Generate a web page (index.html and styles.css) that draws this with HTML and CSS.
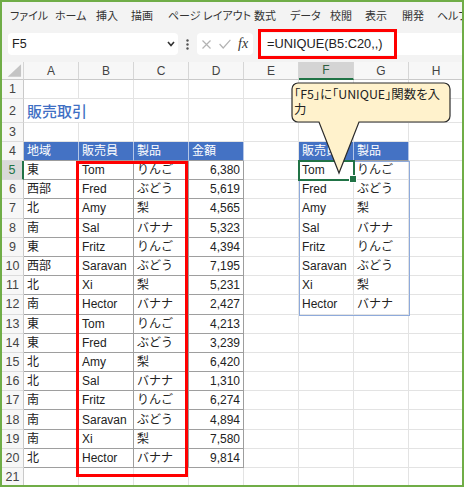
FILE: index.html
```html
<!DOCTYPE html>
<html lang="ja">
<head>
<meta charset="utf-8">
<title>販売取引</title>
<link rel="stylesheet" href="styles.css">
</head>
<body>
<div class="frame">
  <div class="chrome">
    <nav class="menu">
      <span>ファイル</span><span>ホーム</span><span>挿入</span><span>描画</span><span>ページ レイアウト</span><span>数式</span><span>データ</span><span>校閲</span><span>表示</span><span>開発</span><span>ヘルプ</span>
    </nav>
    <div class="fbar">
      <div class="namebox"><span>F5</span><svg width="8" height="6" viewBox="0 0 8 6"><polyline points="1,1 4,4.5 7,1" fill="none" stroke="#333" stroke-width="1.6"/></svg></div>
      <div class="sep"><svg width="3" height="11" viewBox="0 0 3 11"><circle cx="1.5" cy="1.5" r="1.2" fill="#555"/><circle cx="1.5" cy="5.5" r="1.2" fill="#555"/><circle cx="1.5" cy="9.5" r="1.2" fill="#555"/></svg></div>
      <div class="fxbox">
        <svg width="9" height="9" viewBox="0 0 9 9"><path d="M0.5 0.5 L8.5 8.5 M8.5 0.5 L0.5 8.5" stroke="#b3b3b3" stroke-width="1.2"/></svg>
        <svg width="12" height="10" viewBox="0 0 12 10"><polyline points="0.6,5 4.2,9 11.4,0.8" fill="none" stroke="#b3b3b3" stroke-width="1.2"/></svg>
        <span class="fx">fx</span>
      </div>
      <div class="formula"><span>=UNIQUE(B5:C20,,)</span><div class="hl"></div></div>
    </div>
  </div>
  <div class="sheet">
    <div class="c ch corner"><svg width="22" height="18" viewBox="0 0 22 18"><polygon points="20,2 20,15 6,15" fill="#c4c4c4"/></svg></div>
    <div class="c ch">A</div><div class="c ch">B</div><div class="c ch">C</div><div class="c ch">D</div><div class="c ch">E</div><div class="c ch selc">F</div><div class="c ch">G</div><div class="c ch">H</div>

    <div class="c rh">1</div><div class="c"></div><div class="c"></div><div class="c"></div><div class="c"></div><div class="c"></div><div class="c"></div><div class="c"></div><div class="c"></div>
    <div class="c rh">2</div><div class="c title">販売取引</div><div class="c"></div><div class="c"></div><div class="c"></div><div class="c"></div><div class="c"></div><div class="c"></div>
    <div class="c rh">3</div><div class="c"></div><div class="c"></div><div class="c"></div><div class="c"></div><div class="c"></div><div class="c"></div><div class="c"></div><div class="c"></div>
    <div class="c rh">4</div><div class="c th">地域</div><div class="c th">販売員</div><div class="c th">製品</div><div class="c th">金額</div><div class="c"></div><div class="c th">販売員</div><div class="c th">製品</div><div class="c"></div>

    <div class="c rh selr">5</div><div class="c t">東</div><div class="c t">Tom</div><div class="c t">りんご</div><div class="c t n">6,380</div><div class="c"></div><div class="c">Tom</div><div class="c">りんご</div><div class="c"></div>
    <div class="c rh">6</div><div class="c t">西部</div><div class="c t">Fred</div><div class="c t">ぶどう</div><div class="c t n">5,619</div><div class="c"></div><div class="c">Fred</div><div class="c">ぶどう</div><div class="c"></div>
    <div class="c rh">7</div><div class="c t">北</div><div class="c t">Amy</div><div class="c t">梨</div><div class="c t n">4,565</div><div class="c"></div><div class="c">Amy</div><div class="c">梨</div><div class="c"></div>
    <div class="c rh">8</div><div class="c t">南</div><div class="c t">Sal</div><div class="c t">バナナ</div><div class="c t n">5,323</div><div class="c"></div><div class="c">Sal</div><div class="c">バナナ</div><div class="c"></div>
    <div class="c rh">9</div><div class="c t">東</div><div class="c t">Fritz</div><div class="c t">りんご</div><div class="c t n">4,394</div><div class="c"></div><div class="c">Fritz</div><div class="c">りんご</div><div class="c"></div>
    <div class="c rh">10</div><div class="c t">西部</div><div class="c t">Saravan</div><div class="c t">ぶどう</div><div class="c t n">7,195</div><div class="c"></div><div class="c">Saravan</div><div class="c">ぶどう</div><div class="c"></div>
    <div class="c rh">11</div><div class="c t">北</div><div class="c t">Xi</div><div class="c t">梨</div><div class="c t n">5,231</div><div class="c"></div><div class="c">Xi</div><div class="c">梨</div><div class="c"></div>
    <div class="c rh">12</div><div class="c t">南</div><div class="c t">Hector</div><div class="c t">バナナ</div><div class="c t n">2,427</div><div class="c"></div><div class="c">Hector</div><div class="c">バナナ</div><div class="c"></div>
    <div class="c rh">13</div><div class="c t">東</div><div class="c t">Tom</div><div class="c t">りんご</div><div class="c t n">4,213</div><div class="c"></div><div class="c"></div><div class="c"></div><div class="c"></div>
    <div class="c rh">14</div><div class="c t">東</div><div class="c t">Fred</div><div class="c t">ぶどう</div><div class="c t n">3,239</div><div class="c"></div><div class="c"></div><div class="c"></div><div class="c"></div>
    <div class="c rh">15</div><div class="c t">北</div><div class="c t">Amy</div><div class="c t">梨</div><div class="c t n">6,420</div><div class="c"></div><div class="c"></div><div class="c"></div><div class="c"></div>
    <div class="c rh">16</div><div class="c t">北</div><div class="c t">Sal</div><div class="c t">バナナ</div><div class="c t n">1,310</div><div class="c"></div><div class="c"></div><div class="c"></div><div class="c"></div>
    <div class="c rh">17</div><div class="c t">南</div><div class="c t">Fritz</div><div class="c t">りんご</div><div class="c t n">6,274</div><div class="c"></div><div class="c"></div><div class="c"></div><div class="c"></div>
    <div class="c rh">18</div><div class="c t">南</div><div class="c t">Saravan</div><div class="c t">ぶどう</div><div class="c t n">4,894</div><div class="c"></div><div class="c"></div><div class="c"></div><div class="c"></div>
    <div class="c rh">19</div><div class="c t">南</div><div class="c t">Xi</div><div class="c t">梨</div><div class="c t n">7,580</div><div class="c"></div><div class="c"></div><div class="c"></div><div class="c"></div>
    <div class="c rh">20</div><div class="c t">北</div><div class="c t">Hector</div><div class="c t">バナナ</div><div class="c t n">9,814</div><div class="c"></div><div class="c"></div><div class="c"></div><div class="c"></div>
    <div class="c rh">21</div><div class="c"></div><div class="c"></div><div class="c"></div><div class="c"></div><div class="c"></div><div class="c"></div><div class="c"></div><div class="c"></div>

    <div class="spill"></div>
    <div class="active"></div>
    <div class="redbox"></div>
    <div class="callout">
      <svg class="bubble" width="161" height="93" viewBox="0 0 161 93"><path d="M7,1 H153 A6,6 0 0 1 159,7 V34 A6,6 0 0 1 153,40 H68 L48,91 L28,40 H7 A6,6 0 0 1 1,34 V7 A6,6 0 0 1 7,1 Z" fill="#fff2cc" stroke="#2b2b2b" stroke-width="1.2"/></svg>
      <div class="ctext">「F5」に「UNIQUE」関数を入<br>力</div>
    </div>
  </div>
</div>
</body>
</html>
```
FILE: styles.css
```css
* { box-sizing: border-box; }
html, body { margin: 0; padding: 0; background: #fff; }
body { font-family: "Liberation Sans", "Noto Sans CJK JP", sans-serif; color: #222; }

.frame {
  width: 464px;
  height: 487px;
  border: 2px solid #70ad47;
  overflow: hidden;
  background: #fff;
}

.chrome { background: #f3f3f3; height: 60px; }

.menu {
  display: grid;
  grid-template-columns: 45px 41px 35px 37px 86px 36px 40px 35px 37px 35px 40px;
  height: 26px;
  align-items: center;
  padding-left: 8px;
  font-family: "Noto Sans CJK JP", sans-serif;
  font-size: 11px;
  line-height: 14px;
  color: #333;
  font-feature-settings: "palt";
  white-space: nowrap;
  overflow: hidden;
}

.fbar {
  display: flex;
  align-items: flex-start;
  height: 34px;
  padding-top: 5px;
}
.namebox {
  margin-left: 6px;
  width: 170px;
  height: 22px;
  background: #fff;
  border-radius: 4px;
  display: flex;
  align-items: center;
  justify-content: space-between;
  padding: 0 3px 0 4px;
  font-size: 12.5px;
  color: #222;
}
.sep {
  width: 19px;
  height: 22px;
  display: flex;
  align-items: center;
  justify-content: center;
}
.fxbox {
  width: 56px;
  height: 22px;
  background: #fff;
  border-radius: 4px;
  display: flex;
  align-items: center;
  gap: 8px;
  padding-left: 5px;
}
.fx {
  font-family: "Liberation Serif", serif;
  font-style: italic;
  font-size: 14px;
  color: #333;
  margin-left: -1px;
}
.formula {
  position: relative;
  flex: 1;
  margin-left: 5px;
  height: 22px;
  background: #fff;
  padding-left: 9px;
  font-size: 12.8px;
  line-height: 22px;
  color: #222;
  white-space: nowrap;
}
.hl {
  position: absolute;
  left: 0;
  top: -4px;
  width: 139px;
  height: 30px;
  border: 3px solid #ff0000;
}

.sheet {
  position: relative;
  display: grid;
  grid-template-columns: 22px repeat(8, 55px);
  grid-template-rows: 18px 19px 24px 19px 19px repeat(17, 19.2px);
  font-size: 12px;
  line-height: 16px;
}
.c {
  border-right: 1px solid #e3e3e3;
  border-bottom: 1px solid #e3e3e3;
  padding: 0 3px;
  display: flex;
  align-items: center;
  white-space: nowrap;
  overflow: hidden;
  min-width: 0;
}
.ch {
  background: #f7f7f7;
  justify-content: center;
  color: #444;
  border-right-color: #d6d6d6;
  border-bottom-color: #c9c9c9;
}
.corner { padding: 0; }
.rh {
  background: #f7f7f7;
  justify-content: center;
  color: #444;
  padding: 0;
  font-size: 12.5px;
  border-right-color: #c9c9c9;
  border-bottom-color: #dcdcdc;
}
.selc {
  background: #d4d4d4;
  border-bottom: 2px solid #217346;
  color: #2d5f3f;
}
.selr {
  background: #d9d9d9;
  border-right: 2px solid #217346;
  color: #217346;
}
.title {
  grid-column: span 2;
  color: #3f6fc4;
  font-size: 15px;
  font-weight: 500;
  font-family: "Noto Sans CJK JP", sans-serif;
}
.th {
  background: #4472c4;
  color: #fff;
  border-right-color: #b4c6e7;
  border-bottom-color: #9c9c9c;
}
.t {
  border-right-color: #9e9e9e;
  border-bottom-color: #9e9e9e;
}
.n { justify-content: flex-end; }

.spill {
  position: absolute;
  left: 297px;
  top: 99px;
  width: 111px;
  height: 154.6px;
  border: 1px solid #8eaadb;
}
.active {
  position: absolute;
  left: 296px;
  top: 98px;
  width: 57px;
  height: 21.4px;
  border: 2px solid #217346;
}
.active::after {
  content: "";
  position: absolute;
  right: -4px;
  bottom: -4px;
  width: 6px;
  height: 6px;
  background: #217346;
  border: 1px solid #fff;
}
.redbox {
  position: absolute;
  left: 74px;
  top: 99px;
  width: 112px;
  height: 316px;
  border: 3px solid #ff0000;
}
.callout {
  position: absolute;
  left: 289px;
  top: 20px;
  width: 161px;
  height: 93px;
}
.bubble { position: absolute; left: 0; top: 0; }
.ctext {
  position: relative;
  padding: 5px 0 0 3px;
  font-family: "Noto Sans CJK JP", sans-serif;
  font-size: 12.4px;
  line-height: 15px;
  color: #222;
  font-feature-settings: "palt";
  white-space: nowrap;
}
```
